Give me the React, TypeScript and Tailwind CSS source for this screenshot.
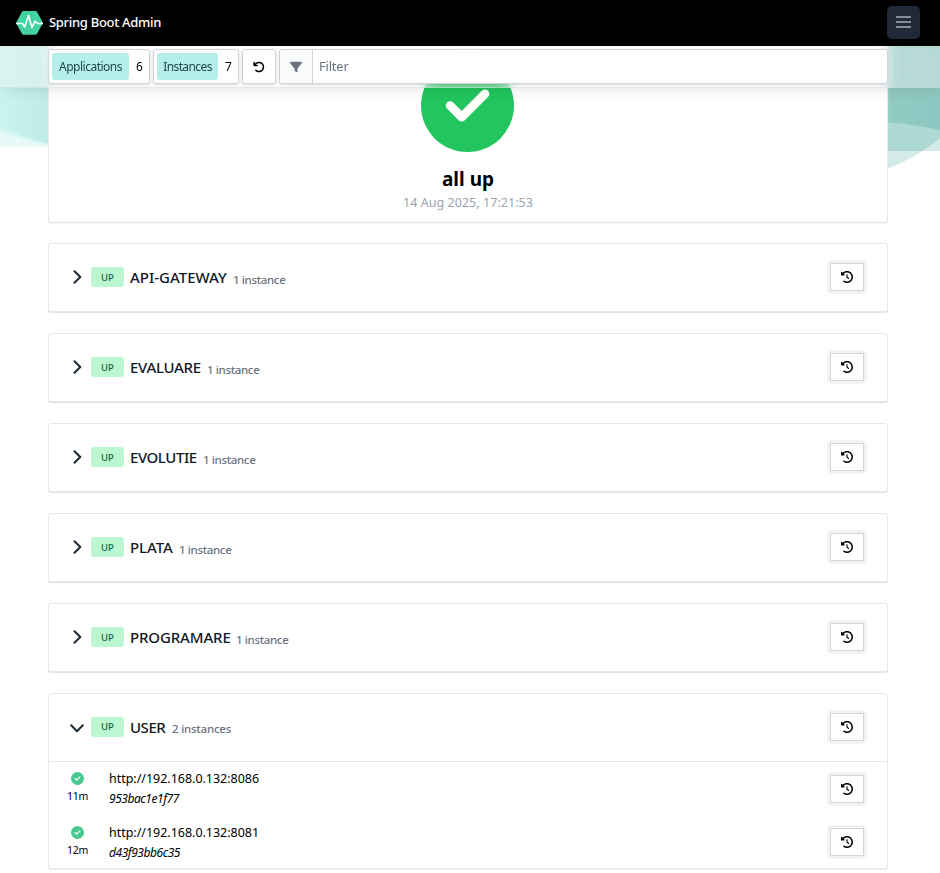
import React from "react";
import { FaFilter, FaCircleCheck, FaClockRotateLeft, FaArrowRotateLeft } from "react-icons/fa6";

const apps = [
  { name: "API-GATEWAY", nameCls: "w-[97px] tracking-[-0.01px]" },
  { name: "EVALUARE", nameCls: "w-[71px] tracking-[-0.3px]" },
  { name: "EVOLUTIE", nameCls: "w-[67px] tracking-[-0.44px]" },
  { name: "PLATA", nameCls: "w-[43px] tracking-[-0.06px]" },
  { name: "PROGRAMARE", nameCls: "w-[100px] tracking-[-0.14px]" },
];

const instances = [
  { age: "11m", url: "http://192.168.0.132:8086", id: "953bac1e1f77", cls: "h-[54px]", textCls: "", statusCls: "pb-[2px]" },
  { age: "12m", url: "http://192.168.0.132:8081", id: "d43f93bb6c35", cls: "h-[52px]", textCls: "pt-[2px]", statusCls: "pb-[1px]" },
];

function HistoryButton() {
  return (
    <span className="-mt-[1px] shrink-0 rounded-[5px] bg-[#f3f3f4] p-[3px]">
      <button className="flex h-[28px] w-[34px] items-center justify-center border border-[#d1d5db] bg-white text-black">
        <FaClockRotateLeft className="size-[12px]" />
      </button>
    </span>
  );
}

function Chevron({ open }: { open?: boolean }) {
  return open ? (
    <svg className="mt-[1px]" width="14" height="9" viewBox="0 0 14 9">
      <path d="M1.200 1.300L7 7.200L12.800 1.300" fill="none" stroke="currentColor" strokeWidth="2" strokeLinecap="round" strokeLinejoin="round" />
    </svg>
  ) : (
    <svg width="9" height="14" viewBox="0 0 9 14">
      <path d="M1.500 1.200L7.300 7L1.500 12.800" fill="none" stroke="currentColor" strokeWidth="2" strokeLinecap="round" strokeLinejoin="round" />
    </svg>
  );
}

function AppHeader({ name, nameCls, count, open }: { name: string; nameCls: string; count: string; open?: boolean }) {
  return (
    <div className="flex h-[67px] items-center pr-[20px] pl-[20px]">
      <span className={`flex w-[16px] justify-center text-[#1f2937] ${open ? "" : "-mt-[1px]"}`}>
        <Chevron open={open} />
      </span>
      <span className={`-mt-[1px] ml-[6px] flex h-[20px] w-[33px] items-center justify-center rounded-[3px] bg-[#bbf7d0] text-[9.5px] font-medium text-[#166534] ${open ? "" : "pt-[2px]"}`}>UP</span>
      <span className={`-mt-[2px] ml-[6px] text-[15px] leading-[24px] font-medium whitespace-nowrap text-[#111827] ${nameCls}`}>{name}</span>
      <span className={`ml-[6px] text-[11.500px] font-medium whitespace-nowrap text-[#6b7280] ${open ? "mt-[2px] tracking-[-0.22px]" : "mt-[4px] tracking-[-0.35px]"}`}>{count}</span>
      <span className="flex-1" />
      <HistoryButton />
    </div>
  );
}

export default function App() {
  return (
    <div className="relative h-[873px] w-[940px] overflow-hidden bg-white font-['Noto_Sans','Open_Sans',sans-serif] text-black">
      <svg className="absolute top-0 left-0" width="940" height="200" viewBox="0 0 940 200">
        <defs>
          <linearGradient id="wave" gradientUnits="userSpaceOnUse" x1="0" x2="940" y1="0" y2="0">
            <stop offset="0" stopColor="#c8f3ef" />
            <stop offset="0.05" stopColor="#c0ece8" />
            <stop offset="0.94" stopColor="#92cac4" />
            <stop offset="1" stopColor="#8ec7c1" />
          </linearGradient>
        </defs>
        <path d="M0 0H48V147H0Z" fill="#e8faf8" />
        <path d="M0 0H48V145Q22 141 0 131Z" fill="#d8f6f3" />
        <path d="M0 0H48V143.500Q20 137 0 127Z" fill="url(#wave)" />
        <path d="M888 0H940V138.500Q914 159 888 168.500Z" fill="#d3eae7" />
        <path d="M888 0H940V151H888Z" fill="#d3eae7" />
        <path d="M888 0H940V138.500Q930 146 922 151H888Z" fill="#aed8d3" />
        <path d="M888 0H940V130Q913 124 888 122.500Z" fill="url(#wave)" />
      </svg>

      <header className="relative z-20 flex h-[46px] items-center bg-black pr-[20px] pb-[1px] pl-[16px]">
        <svg width="27" height="26" viewBox="0 0 27 26">
          <path d="M7.500 1H19.500Q20.500 1 21 1.800L26.500 12Q27 13 26.500 14L21 23.800Q20.500 24.700 19.500 24.700H7.500Q6.500 24.700 6 23.800L.5 14Q0 13 .5 12L6 1.800Q6.500 1 7.500 1Z" fill="#42d3a5" />
          <path d="M0 13.500H6.500L8.700 17L12.500 5.500L16 17.500L19 11L21.500 13.500H27" fill="none" stroke="#fff" strokeWidth="1.600" strokeLinejoin="round" />
        </svg>
        <span className="ml-[6px] text-[13px] font-medium tracking-[-0.3px] whitespace-nowrap text-white">Spring Boot Admin</span>
        <button className="ml-auto flex size-[33px] items-center justify-center rounded-[5px] bg-[#1f2937]">
          <svg className="-mt-[1px]" width="16" height="12" viewBox="0 0 16 12">
            <path d="M0 1H15M0 6H15M0 11H15" stroke="#858d99" strokeWidth="1.800" />
          </svg>
        </button>
      </header>

      <div className="absolute top-[46px] left-0 z-10 flex h-[42px] w-full items-center gap-[3px] border-b border-[#d1d5db]/50 bg-[#f3f4f6]/40 pr-[52px] pb-[1px] pl-[48px] shadow-[0_6px_14px_-4px_rgba(0,0,0,0.10)] backdrop-blur-[6px]">
        <div className="flex h-[35px] w-[102px] shrink-0 items-center rounded-[3px] border border-[#d1d5db] bg-white pl-[3px] text-[12px] shadow-sm">
          <span className="flex h-[27px] w-[77px] items-center justify-center rounded-[3px] bg-[#b6efe9] pt-[2px] tracking-[-0.5px] text-[#1a4a4a]">Applications</span>
          <span className="ml-[7px] pt-[2px]">6</span>
        </div>
        <div className="flex h-[35px] w-[86px] shrink-0 items-center rounded-[3px] border border-[#d1d5db] bg-white pl-[3px] text-[12px] shadow-sm">
          <span className="flex h-[27px] w-[61px] items-center justify-center rounded-[3px] bg-[#b6efe9] pt-[2px] tracking-[-0.6px] text-[#1a4a4a]">Instances</span>
          <span className="ml-[7px] pt-[2px]">7</span>
        </div>
        <button className="flex h-[35px] w-[34px] shrink-0 items-center justify-center rounded-[3px] border border-[#d1d5db] bg-white pt-[1px] shadow-sm">
          <FaArrowRotateLeft className="size-[12px]" />
        </button>
        <div className="flex h-[35px] flex-1 overflow-hidden rounded-[3px] border border-[#d1d5db] bg-white shadow-sm">
          <span className="flex w-[33px] items-center justify-center border-r border-[#d1d5db] bg-[#f9fafb] pt-[1px] text-[#6b7280]">
            <FaFilter className="size-[12px]" />
          </span>
          <span className="flex items-center pt-[2px] pl-[6px] text-[13px] tracking-[-0.2px] text-[#6b7280]">Filter</span>
        </div>
      </div>

      <main className="relative flex flex-col pr-[52px] pl-[48px]">
        <section className="mb-[20px] flex h-[177px] flex-col items-center rounded-b-[3px] border border-t-0 border-[#e5e7eb] bg-white pt-[13px] shadow-[0_1px_1px_#f3f4f6]">
          <FaCircleCheck className="mr-[1px] size-[93px] shrink-0 text-[#22c55e]" />
          <h1 className="mt-[13px] text-[19px] leading-[28px] font-bold">all up</h1>
          <p className="text-[12.500px] leading-[20px] tracking-[0.05px] text-[#9ca3af]">14 Aug 2025, 17:21:53</p>
        </section>

        {apps.map((a) => (
          <section key={a.name} className="mb-[21px] h-[69px] rounded-[3px] border border-[#e5e7eb] bg-white shadow-[0_1px_1px_#dfe1e6]">
            <AppHeader name={a.name} nameCls={a.nameCls} count="1 instance" />
          </section>
        ))}

        <section className="h-[176px] rounded-[3px] border border-[#e5e7eb] bg-white shadow-[0_1px_1px_#eeeff2]">
          <AppHeader name="USER" nameCls="w-[36px] tracking-[-0.46px]" count="2 instances" open />
          <div className="border-t border-[#e5e7eb]">
            {instances.map((i) => (
              <div key={i.id} className={`flex items-center pr-[20px] pl-[18px] ${i.cls}`}>
                <div className={`flex w-[21px] flex-col items-center ${i.statusCls}`}>
                  <FaCircleCheck className="size-[13px] text-[#48c78e]" />
                  <span className="mt-[3px] text-[10.500px] leading-[16px] tracking-[-0.3px]">{i.age}</span>
                </div>
                <div className={`ml-[21px] flex flex-1 flex-col whitespace-nowrap ${i.textCls}`}>
                  <span className="text-[12.500px] leading-[20px] tracking-[-0.02px]">{i.url}</span>
                  <span className="text-[12px] leading-[20px] tracking-[-0.45px] italic">{i.id}</span>
                </div>
                <HistoryButton />
              </div>
            ))}
          </div>
        </section>
      </main>
    </div>
  );
}
